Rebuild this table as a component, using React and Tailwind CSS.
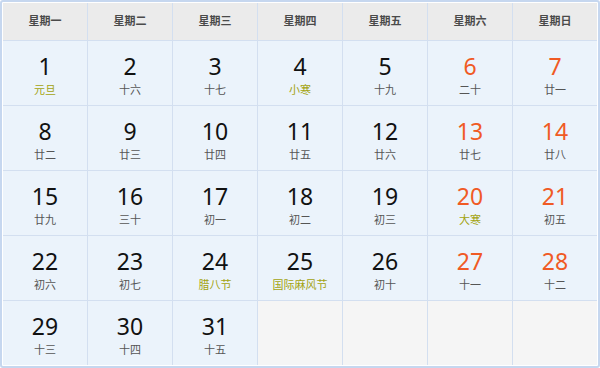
const weekdays = ["星期一", "星期二", "星期三", "星期四", "星期五", "星期六", "星期日"];

const days = [
  { d: 1, l: "元旦", fest: true },
  { d: 2, l: "十六" },
  { d: 3, l: "十七" },
  { d: 4, l: "小寒", fest: true },
  { d: 5, l: "十九" },
  { d: 6, l: "二十" },
  { d: 7, l: "廿一" },
  { d: 8, l: "廿二" },
  { d: 9, l: "廿三" },
  { d: 10, l: "廿四" },
  { d: 11, l: "廿五" },
  { d: 12, l: "廿六" },
  { d: 13, l: "廿七" },
  { d: 14, l: "廿八" },
  { d: 15, l: "廿九" },
  { d: 16, l: "三十" },
  { d: 17, l: "初一" },
  { d: 18, l: "初二" },
  { d: 19, l: "初三" },
  { d: 20, l: "大寒", fest: true },
  { d: 21, l: "初五" },
  { d: 22, l: "初六" },
  { d: 23, l: "初七" },
  { d: 24, l: "腊八节", fest: true },
  { d: 25, l: "国际麻风节", fest: true },
  { d: 26, l: "初十" },
  { d: 27, l: "十一" },
  { d: 28, l: "十二" },
  { d: 29, l: "十三" },
  { d: 30, l: "十四" },
  { d: 31, l: "十五" },
  null,
  null,
  null,
  null,
];

function App() {
  return (
    <div
      className="w-[600px] h-[368px] bg-white"
      style={{ fontFamily: '"Noto Sans", "Noto Sans CJK SC", sans-serif' }}
    >
      <div className="h-full border-2 border-[#c6d7ef] rounded-[3px] p-px bg-white">
        <div className="grid grid-cols-[repeat(7,84px)] grid-rows-[37px_repeat(5,64px)] gap-px bg-[#d3dff0] h-full">
          {weekdays.map((w) => (
            <div
              key={w}
              className="bg-[#ebebeb] flex items-center justify-center text-[11px] font-bold text-[#4a4a4a]"
            >
              {w}
            </div>
          ))}

          {days.map((item, i) => {
            if (!item) {
              return <div key={"e" + i} className="bg-[#f5f5f5]" />;
            }
            const weekend = i % 7 >= 5;
            return (
              <div
                key={item.d}
                className="bg-[#ebf3fb] flex flex-col items-center pt-[13px]"
              >
                <span
                  className={
                    "text-[23px] leading-[25px] " +
                    (weekend ? "text-[#f05a24]" : "text-[#111]")
                  }
                >
                  {item.d}
                </span>
                <span
                  className={
                    "text-[11px] leading-[13px] mt-[4px] " +
                    (item.fest ? "text-[#a3a30f]" : "text-[#555]")
                  }
                >
                  {item.l}
                </span>
              </div>
            );
          })}
        </div>
      </div>
    </div>
  );
}

export default App;
